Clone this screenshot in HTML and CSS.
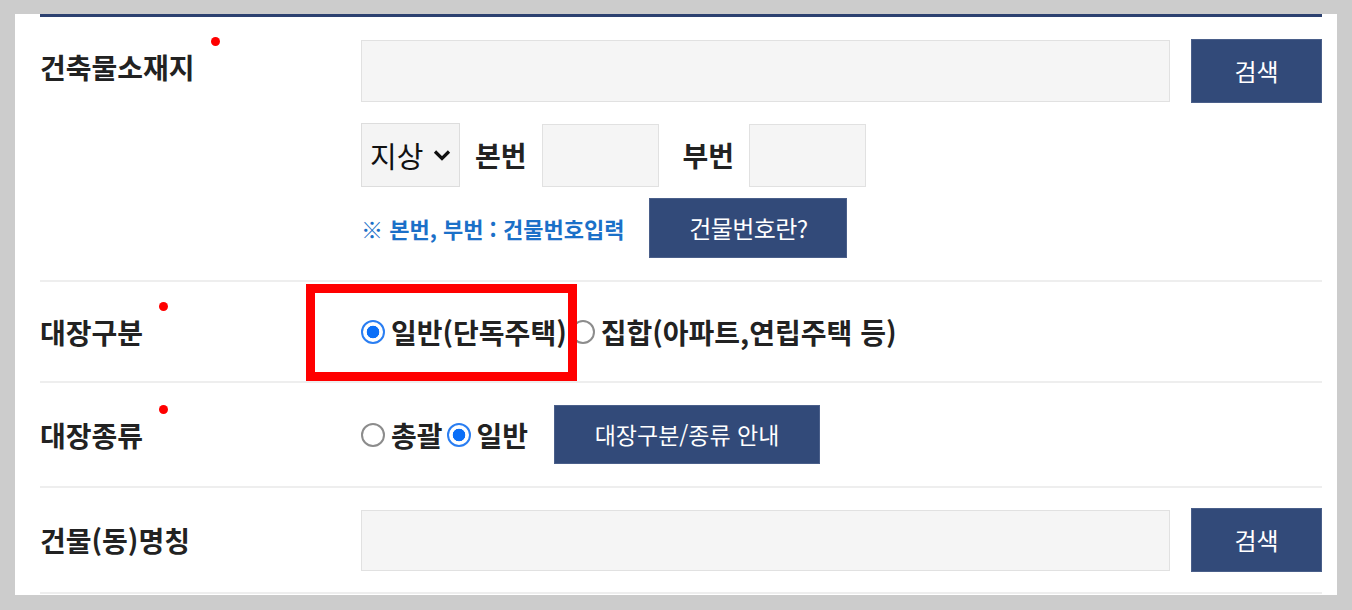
FILE: index.html
```html
<!DOCTYPE html>
<html lang="ko">
<head>
<meta charset="utf-8">
<title>건축물대장</title>
<link rel="stylesheet" href="styles.css">
</head>
<body>
<div class="page">
  <div class="form">
    <div class="row row-addr">
      <div class="label label-top"><span class="req">건축물소재지</span></div>
      <div class="field">
        <div class="line">
          <input class="text wide" type="text">
          <button class="btn btn-search" type="button">검색</button>
        </div>
        <div class="line line-num">
          <div class="select">
            <span>지상</span>
            <svg class="chev" width="18" height="12" viewBox="0 0 18 12"><path d="M2 2.5 L9 9.5 L16 2.5" fill="none" stroke="#111" stroke-width="3.2" stroke-linejoin="miter"/></svg>
          </div>
          <span class="sub">본번</span>
          <input class="text num" type="text">
          <span class="sub sub2">부번</span>
          <input class="text num" type="text">
        </div>
        <div class="line line-note">
          <span class="note">※ 본번, 부번 : 건물번호입력</span>
          <button class="btn btn-what" type="button">건물번호란?</button>
        </div>
      </div>
    </div>
    <div class="row row-kind">
      <div class="label"><span class="req">대장구분</span></div>
      <div class="radios">
        <span class="opt"><span class="radio on"></span>일반(단독주택)</span>
        <span class="opt"><span class="radio"></span>집합(아파트,연립주택 등)</span>
      </div>
    </div>
    <div class="row row-type">
      <div class="label"><span class="req">대장종류</span></div>
      <div class="radios">
        <span class="opt"><span class="radio"></span>총괄</span>
        <span class="opt"><span class="radio on"></span>일반</span>
        <button class="btn btn-guide" type="button">대장구분/종류 안내</button>
      </div>
    </div>
    <div class="row row-name">
      <div class="label">건물(동)명칭</div>
      <div class="line">
        <input class="text wide name" type="text">
        <button class="btn btn-search" type="button">검색</button>
      </div>
    </div>
  </div>
  <div class="highlight"></div>
</div>
</body>
</html>
```
FILE: styles.css
```css
* { box-sizing: border-box; }
html, body { margin: 0; padding: 0; }
body {
  background: #cccccc;
  font-family: "Noto Sans CJK KR", "Noto Sans", sans-serif;
  height: 610px;
  overflow: hidden;
}
.page {
  position: relative;
  margin: 14px 15px 0 15px;
  background: #ffffff;
  padding: 0 15px 1px 25px;
}
.form {
  border-top: 3px solid #2c4170;
}
.row {
  display: grid;
  grid-template-columns: 321px 1fr;
  align-items: center;
  border-bottom: 2px solid #eeeeee;
}
.row-addr { align-items: start; padding: 22px 0; }
.row-kind { height: 101px; }
.row-type { height: 105px; }
.row-name { height: 106px; }

.label {
  font-size: 28px;
  font-weight: 700;
  color: #222222;
  line-height: 32px;
}
.label-top { margin-top: 12px; }
.req { position: relative; }
.req::after {
  content: "";
  position: absolute;
  left: calc(100% + 16px);
  top: -10px;
  width: 9px;
  height: 9px;
  border-radius: 50%;
  background: #ff0000;
}

.line { display: flex; align-items: center; }
.line-num { margin-top: 20px; }
.line-note { margin-top: 11px; }

.text {
  height: 62px;
  border: 1px solid #e1e1e1;
  background: #f5f5f5;
  padding: 0 10px;
  font: inherit;
  outline: none;
}
.wide { flex: 1; min-width: 0; }
.name { height: 61px; }
.num { width: 117px; height: 63px; }

.btn {
  background: #324a79;
  color: #ffffff;
  border: 1px solid #4a5f8a;
  font-family: inherit;
  font-weight: 400;
  padding: 0;
  line-height: 1;
}
.btn-search { width: 131px; height: 64px; font-size: 24px; margin-left: 21px; flex: none; }
.btn-what { width: 198px; height: 60px; font-size: 24px; margin-left: 25px; letter-spacing: -0.6px; }
.btn-guide { width: 266px; height: 59px; font-size: 23px; margin-left: 22px; }

.select {
  width: 99px;
  height: 64px;
  border: 1px solid #dddddd;
  background: #f4f4f4;
  display: flex;
  align-items: center;
  padding-left: 8px;
  gap: 10px;
  font-size: 29px;
  color: #111111;
  line-height: 32px;
}
.chev { flex: none; }
.sub {
  font-size: 28px;
  font-weight: 700;
  color: #222222;
  margin: 0 15px 0 15px;
  line-height: 32px;
}
.sub2 { margin-left: 24px; }

.note {
  color: #1b70c8;
  font-size: 22px;
  font-weight: 700;
  letter-spacing: 0;
  line-height: 28px;
}

.radios {
  display: flex;
  align-items: center;
  gap: 4px;
  font-size: 28px;
  font-weight: 700;
  color: #222222;
  line-height: 32px;
}
.opt { display: inline-flex; align-items: center; gap: 6px; }
.radio {
  width: 24px;
  height: 24px;
  border-radius: 50%;
  border: 2px solid #8c8c8c;
  background: #ffffff;
  flex: none;
}
.radio.on {
  border: 2.5px solid #2a7ef2;
  background: radial-gradient(circle, #0b6ff7 0 6px, #ffffff 6.6px);
}

.highlight {
  position: absolute;
  left: 291px;
  top: 270px;
  width: 271px;
  height: 97px;
  border: 9px solid #ff0000;
}
```
